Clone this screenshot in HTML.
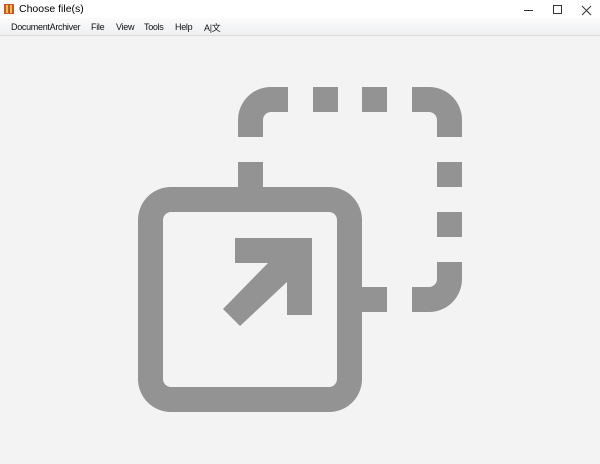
<!DOCTYPE html>
<html><head><style>
body{margin:0;width:600px;height:464px;overflow:hidden;background:#f3f3f3;font-family:"Liberation Sans","Noto Sans CJK SC",sans-serif;position:relative}
.title{position:absolute;left:0;top:0;width:600px;height:18px;background:#fff;font-size:10.5px}
.menu{position:absolute;left:0;top:18px;width:600px;height:17px;background:linear-gradient(#fbfbfb,#eef0f2);border-bottom:1px solid #dcdcdc;font-size:9px;letter-spacing:-0.3px}
.menu span{position:absolute;top:4px;color:#111;white-space:nowrap}
</style></head><body>
<div class="title">
<svg style="position:absolute;left:4px;top:4px" width="10" height="10"><rect width="10" height="10" fill="#c9562a"/><rect x="2" y="1" width="2" height="8" fill="#f3c24a"/><rect x="6" y="1" width="2" height="8" fill="#f3c24a"/></svg>
<span style="position:absolute;left:19px;top:3px;color:#000">Choose file(s)</span>
<svg style="position:absolute;left:520px;top:4px" width="80" height="12" stroke="#333" fill="none" stroke-width="1">
<line x1="4" y1="6.5" x2="13" y2="6.5"/><rect x="33.5" y="1.5" width="8" height="8"/><path d="M62 2L71 11M71 2L62 11"/></svg>
</div>
<div class="menu">
<span style="left:11px">DocumentArchiver</span><span style="left:91px">File</span><span style="left:116px">View</span><span style="left:144px">Tools</span><span style="left:175px">Help</span><span style="left:204px;top:3px">A|文</span>
</div>
<svg style="position:absolute;left:0;top:0" width="600" height="464" fill="#939393">
<path fill-rule="evenodd" d="M171 187H329A33 33 0 0 1 362 220V379A33 33 0 0 1 329 412H171A33 33 0 0 1 138 379V220A33 33 0 0 1 171 187ZM171 212H329A8 8 0 0 1 337 220V379A8 8 0 0 1 329 387H171A8 8 0 0 1 163 379V220A8 8 0 0 1 171 212Z"/>
<path d="M288 87H271A33 33 0 0 0 238 120V137H263V120A8 8 0 0 1 271 112H288Z"/>
<rect x="313" y="87" width="25" height="25"/><rect x="362" y="87" width="25" height="25"/>
<path d="M412 87H429A33 33 0 0 1 462 120V137H437V120A8 8 0 0 0 429 112H412Z"/>
<rect x="437" y="162" width="25" height="25"/><rect x="437" y="212" width="25" height="25"/>
<path d="M462 262V279A33 33 0 0 1 429 312H412V287H429A8 8 0 0 0 437 279V262Z"/>
<rect x="337" y="287" width="50" height="25"/>
<rect x="238" y="162" width="25" height="26"/>
<polygon points="235,238 312,238 312,315 287,315 287,282 240,326 223,309 268,263 235,263"/>
</svg>
</body></html>
